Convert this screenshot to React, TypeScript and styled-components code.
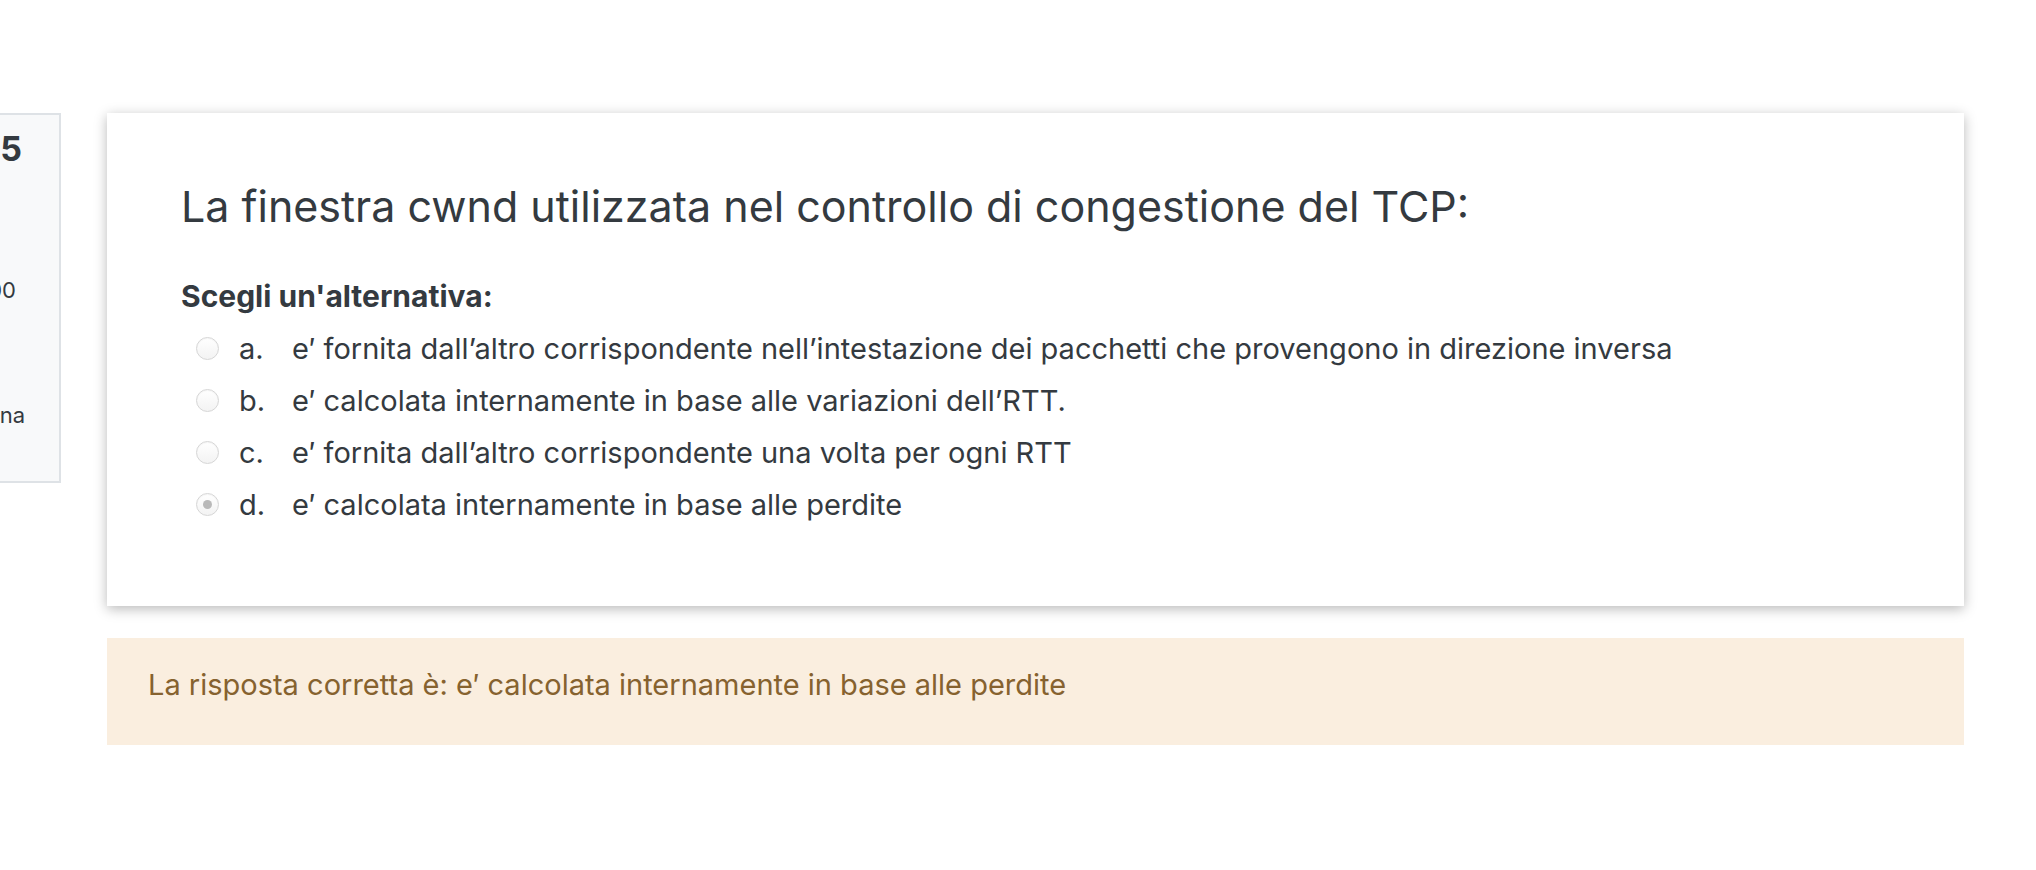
import styled, { createGlobalStyle } from 'styled-components'

const GlobalStyle = createGlobalStyle`
  html, body {
    margin: 0;
    padding: 0;
    background: #ffffff;
    overflow: hidden;
  }
  body {
    font-family: Inter, "Noto Sans", "Liberation Sans", sans-serif;
    color: #343a40;
  }
`

const Page = styled.div`
  display: flex;
  align-items: flex-start;
  gap: 46px;
  padding: 113px 72px 0 0;
  height: 870px;
  box-sizing: border-box;
`

/* info column of the question; its left part lies off screen */
const InfoPanel = styled.div`
  flex: 0 0 150px;
  margin-left: -89px;
  height: 370px;
  box-sizing: border-box;
  background: #f8f9fa;
  border: 2px solid #dee2e6;
  padding-top: 12px;
  display: flex;
  flex-direction: column;
  align-items: flex-end;
  white-space: nowrap;
  overflow: hidden;
`

const QNo = styled.div`
  font-size: 34px;
  font-weight: 700;
  line-height: 44px;
  margin-right: 37px;
`

const InfoLine = styled.div<{ $top: number; $right: number }>`
  margin-top: ${p => p.$top}px;
  margin-right: ${p => p.$right}px;
  font-size: 22px;
  line-height: 30px;
`

const Main = styled.div`
  flex: 1;
  display: flex;
  flex-direction: column;
  gap: 32px;
`

const Card = styled.div`
  background: #ffffff;
  box-shadow: 0 3px 12px rgba(0, 0, 0, 0.28);
  padding: 68px 74px 76px;
`

const Title = styled.h2`
  margin: 0;
  font-size: 43px;
  font-weight: 400;
  line-height: 50px;
  color: #343a40;
`

const Prompt = styled.div`
  margin-top: 47px;
  font-size: 30px;
  font-weight: 700;
  line-height: 36px;
`

const Answers = styled.div`
  margin-top: 8px;
  padding-left: 15px;
  display: flex;
  flex-direction: column;
`

const Option = styled.label`
  display: flex;
  align-items: center;
  height: 52px;
  font-size: 29px;
`

const Radio = styled.span<{ $checked: boolean }>`
  flex: 0 0 auto;
  width: 23px;
  height: 23px;
  box-sizing: border-box;
  border-radius: 50%;
  border: 1px solid #d6d6d6;
  background: linear-gradient(#ffffff, #f3f3f3);
  box-shadow: inset 0 1px 1px rgba(0, 0, 0, 0.04);
  margin-right: 20px;
  display: flex;
  align-items: center;
  justify-content: center;

  &::after {
    content: '';
    display: ${p => (p.$checked ? 'block' : 'none')};
    width: 9px;
    height: 9px;
    border-radius: 50%;
    background: #b9b9b9;
  }
`

const Letter = styled.span`
  flex: 0 0 53px;
`

const Feedback = styled.div`
  background: #faeedf;
  color: #86622f;
  font-size: 29px;
  line-height: 38px;
  padding: 28px 41px 41px;
`

const options = [
  { letter: 'a.', text: 'e′ fornita dall’altro corrispondente nell’intestazione dei pacchetti che provengono in direzione inversa' },
  { letter: 'b.', text: 'e′ calcolata internamente in base alle variazioni dell’RTT.' },
  { letter: 'c.', text: 'e′ fornita dall’altro corrispondente una volta per ogni RTT' },
  { letter: 'd.', text: 'e′ calcolata internamente in base alle perdite', checked: true },
]

export default function App() {
  return (
    <>
      <GlobalStyle />
      <Page>
        <InfoPanel>
          <QNo>Domanda 5</QNo>
          <InfoLine $top={104} $right={43}>1,00 su 1,00</InfoLine>
          <InfoLine $top={95} $right={34}>Contrassegna</InfoLine>
        </InfoPanel>
        <Main>
          <Card>
            <Title>La finestra cwnd utilizzata nel controllo di congestione del TCP:</Title>
            <Prompt>Scegli un'alternativa:</Prompt>
            <Answers>
              {options.map(o => (
                <Option key={o.letter}>
                  <Radio $checked={!!o.checked} />
                  <Letter>{o.letter}</Letter>
                  <span>{o.text}</span>
                </Option>
              ))}
            </Answers>
          </Card>
          <Feedback>La risposta corretta è: e′ calcolata internamente in base alle perdite</Feedback>
        </Main>
      </Page>
    </>
  )
}
